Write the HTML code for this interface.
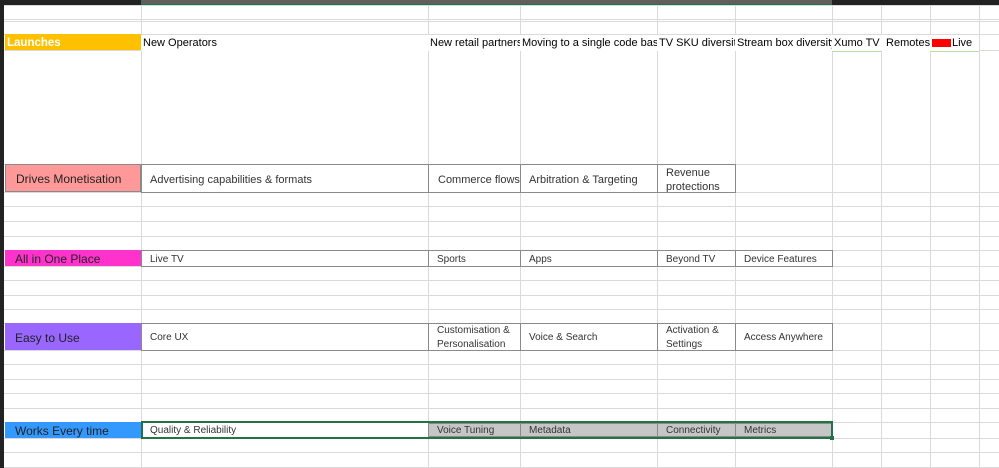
<!DOCTYPE html><html><head><style>
body{margin:0;width:999px;height:468px;overflow:hidden;background:#fff;position:relative;font-family:"Liberation Sans",sans-serif;}
div{position:absolute;box-sizing:border-box;}
.h{left:4px;width:995px;height:1px;background:#dadada}
.v{top:5px;width:1px;height:463px;background:#dadada}
.t{font-size:11px;color:#000;white-space:nowrap;overflow:hidden;padding-left:2px;line-height:16px}
.c{font-size:10px;color:#333;white-space:nowrap;overflow:hidden;border:1px solid #8a8a8a;display:flex;align-items:center;padding-left:8px;padding-top:2px;line-height:14px}
.l{font-size:12px;color:#222;padding-left:10px;display:flex;align-items:center;padding-top:2px}
</style></head><body>
<div style="left:0;top:0;width:4px;height:468px;background:#222"></div>
<div style="left:0;top:0;width:999px;height:5px;background:#222"></div>
<div style="left:141px;top:0;width:691px;height:5px;background:#5f5f5f;border-bottom:1px solid #217346"></div>
<div class="h" style="top:5px"></div><div class="h" style="top:19px"></div><div class="h" style="top:21px"></div>
<div class="h" style="top:34px"></div><div class="h" style="top:50px"></div><div class="h" style="top:164px"></div>
<div class="h" style="top:192px"></div><div class="h" style="top:206px"></div><div class="h" style="top:221px"></div>
<div class="h" style="top:236px"></div><div class="h" style="top:250px"></div><div class="h" style="top:266px"></div>
<div class="h" style="top:280px"></div><div class="h" style="top:295px"></div><div class="h" style="top:309px"></div>
<div class="h" style="top:323px"></div><div class="h" style="top:350px"></div><div class="h" style="top:364px"></div>
<div class="h" style="top:379px"></div><div class="h" style="top:393px"></div><div class="h" style="top:408px"></div>
<div class="h" style="top:422px"></div><div class="h" style="top:438px"></div><div class="h" style="top:452px"></div>
<div class="h" style="top:467px"></div>
<div class="v" style="left:141px"></div><div class="v" style="left:428px"></div><div class="v" style="left:520px"></div>
<div class="v" style="left:657px"></div><div class="v" style="left:735px"></div><div class="v" style="left:832px"></div>
<div class="v" style="left:881px"></div><div class="v" style="left:930px"></div><div class="v" style="left:979px"></div>
<div style="left:5px;top:34px;width:136px;height:16px;background:#ffc000;color:#fff;font-weight:bold;font-size:11.5px;line-height:18px;padding-left:2px">Launches</div>
<div class="t" style="left:141px;top:35px;width:287px;background:#fff">New Operators</div>
<div class="t" style="left:428px;top:35px;width:92px;background:#fff">New retail partners</div>
<div class="t" style="left:520px;top:35px;width:137px;background:#fff">Moving to a single code base</div>
<div class="t" style="left:657px;top:35px;width:78px;background:#fff">TV SKU diversity</div>
<div class="t" style="left:735px;top:35px;width:97px;background:#fff">Stream box diversity</div>
<div class="t" style="left:832px;top:35px;width:49px;background:#fff;border-bottom:1px solid #b8e0a0">Xumo TV</div>
<div class="t" style="left:881px;top:35px;width:49px;background:#fff">&nbsp;Remotes</div>
<div class="t" style="left:930px;top:35px;width:49px;background:#fff;border-bottom:1px solid #b8e0a0"><span style="display:inline-block;width:19px;height:8px;background:#f00;vertical-align:middle;margin-right:1px"></span>Live</div>
<div class="l" style="left:5px;top:164px;width:136px;height:28px;background:#ff9999;border:1px solid #8a8a8a">Drives Monetisation</div>
<div class="c" style="left:141px;top:164px;width:288px;height:29px;font-size:11px">Advertising capabilities &amp; formats</div>
<div class="c" style="left:428px;top:164px;width:93px;height:29px;font-size:11px;padding-left:9px">Commerce flows</div>
<div class="c" style="left:520px;top:164px;width:138px;height:29px;font-size:11px">Arbitration &amp; Targeting</div>
<div class="c" style="left:657px;top:164px;width:79px;height:29px;font-size:11px;white-space:normal">Revenue protections</div>
<div class="l" style="left:5px;top:250px;width:136px;height:16px;background:#ff33cc">All in One Place</div>
<div class="c" style="left:141px;top:250px;width:288px;height:17px">Live TV</div>
<div class="c" style="left:428px;top:250px;width:93px;height:17px">Sports</div>
<div class="c" style="left:520px;top:250px;width:138px;height:17px">Apps</div>
<div class="c" style="left:657px;top:250px;width:79px;height:17px">Beyond TV</div>
<div class="c" style="left:735px;top:250px;width:98px;height:17px">Device Features</div>
<div class="l" style="left:5px;top:323px;width:136px;height:27px;background:#9966ff">Easy to Use</div>
<div class="c" style="left:141px;top:323px;width:288px;height:28px">Core UX</div>
<div class="c" style="left:428px;top:323px;width:93px;height:28px;white-space:normal">Customisation &amp; Personalisation</div>
<div class="c" style="left:520px;top:323px;width:138px;height:28px">Voice &amp; Search</div>
<div class="c" style="left:657px;top:323px;width:79px;height:28px;white-space:normal">Activation &amp; Settings</div>
<div class="c" style="left:735px;top:323px;width:98px;height:28px">Access Anywhere</div>
<div class="l" style="left:5px;top:422px;width:136px;height:16px;background:#3399ff">Works Every time</div>
<div class="c" style="left:141px;top:422px;width:288px;height:16px;border-color:#fff">Quality &amp; Reliability</div>
<div class="c" style="left:428px;top:423px;width:93px;height:14px;background:#c6c6c6">Voice Tuning</div>
<div class="c" style="left:520px;top:423px;width:138px;height:14px;background:#c6c6c6">Metadata</div>
<div class="c" style="left:657px;top:423px;width:79px;height:14px;background:#c6c6c6">Connectivity</div>
<div class="c" style="left:735px;top:423px;width:97px;height:14px;background:#c6c6c6">Metrics</div>
<div style="left:141px;top:421px;width:692px;height:18px;border:2px solid #217346"></div>
<div style="left:830px;top:436px;width:4px;height:4px;background:#217346"></div>
</body></html>
